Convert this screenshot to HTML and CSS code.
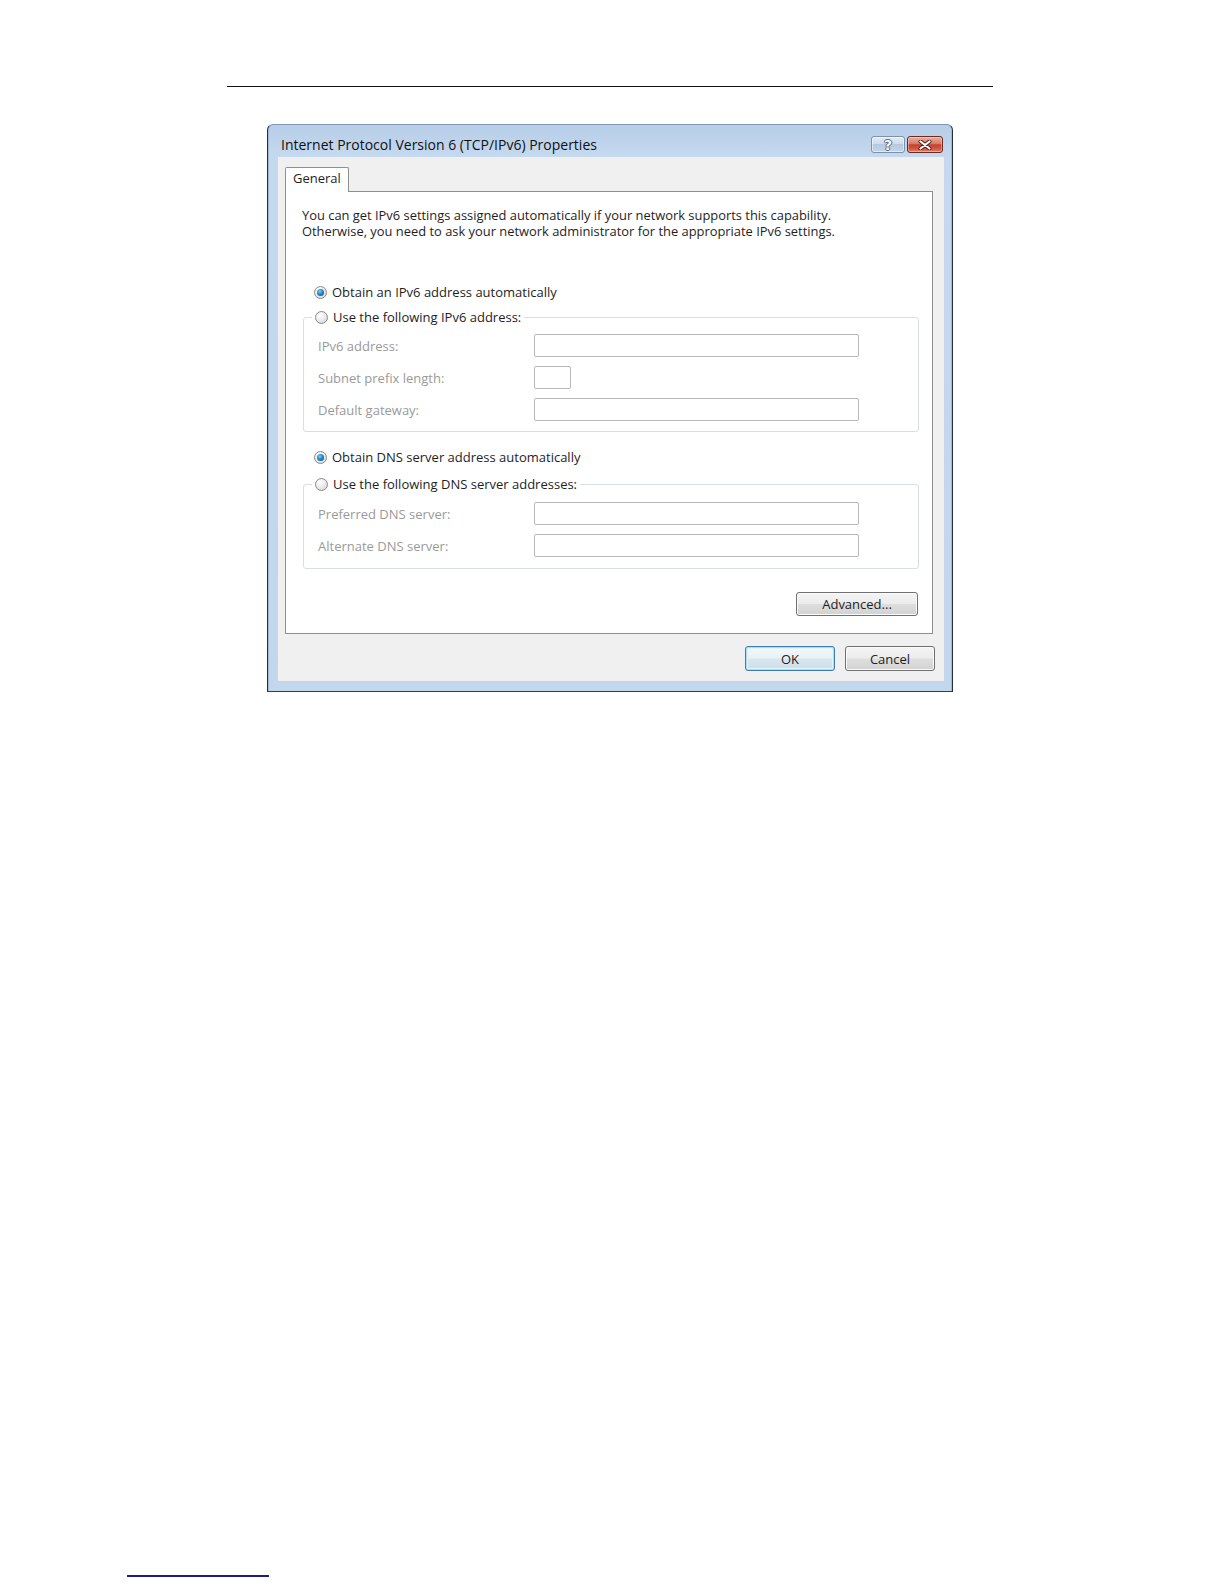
FILE: index.html
```html
<!DOCTYPE html>
<html lang="en">
<head>
<meta charset="utf-8">
<title>Internet Protocol Version 6 (TCP/IPv6) Properties</title>
<link rel="stylesheet" href="styles.css">
</head>
<body>
<div class="page">
  <div class="rule-top"></div>

  <div class="window">
    <div class="titlebar">
      <span class="title">Internet Protocol Version 6 (TCP/IPv6) Properties</span>
      <div class="caption-btns">
        <span class="cbtn help"><span class="qmark">?</span></span>
        <span class="cbtn close">
          <svg width="14" height="10" viewBox="0 0 14 10">
            <path d="M2.5 1.5 L11.5 8.5 M11.5 1.5 L2.5 8.5" stroke="#5a1a12" stroke-width="4" stroke-linecap="round"/>
            <path d="M2.5 1.5 L11.5 8.5 M11.5 1.5 L2.5 8.5" stroke="#ffffff" stroke-width="2.2" stroke-linecap="round"/>
          </svg>
        </span>
      </div>
    </div>

    <div class="client">
      <div class="tabs"><div class="tab">General</div></div>
      <div class="panel">
        <p class="desc">You can get IPv6 settings assigned automatically if your network supports this capability.<br>Otherwise, you need to ask your network administrator for the appropriate IPv6 settings.</p>

        <div class="radio-row first"><span class="radio checked"></span>Obtain an IPv6 address automatically</div>

        <fieldset class="group g1">
          <legend><span class="radio"></span>Use the following IPv6 address:</legend>
          <div class="fields">
            <span class="lbl">IPv6 address:</span><span class="input"></span>
            <span class="lbl">Subnet prefix length:</span><span class="input small"></span>
            <span class="lbl">Default gateway:</span><span class="input"></span>
          </div>
        </fieldset>

        <div class="radio-row second"><span class="radio checked"></span>Obtain DNS server address automatically</div>

        <fieldset class="group g2">
          <legend><span class="radio"></span>Use the following DNS server addresses:</legend>
          <div class="fields">
            <span class="lbl">Preferred DNS server:</span><span class="input"></span>
            <span class="lbl">Alternate DNS server:</span><span class="input"></span>
          </div>
        </fieldset>

        <div class="adv-row"><span class="btn adv">Advanced...</span></div>
      </div>
      <div class="btn-row">
        <span class="btn default">OK</span>
        <span class="btn">Cancel</span>
      </div>
    </div>
  </div>

  <div class="rule-bottom"></div>
</div>
</body>
</html>
```

FILE: styles.css
```css
* { box-sizing: border-box; }

body {
  margin: 0;
  background: #ffffff;
  font-family: "Open Sans", "Noto Sans", "DejaVu Sans", sans-serif;
  font-size: 13px;
  color: #1e1e1e;
}

.page {
  width: 1224px;
  height: 1584px;
  padding-top: 86px;
  overflow: hidden;
}

.rule-top {
  margin-left: 227px;
  width: 766px;
  height: 1px;
  background: #111111;
}

.rule-bottom {
  margin: 883px 0 0 127px;
  width: 142px;
  height: 2px;
  background: #1c1c8a;
}

/* ---------- window frame ---------- */
.window {
  margin: 37px 0 0 267px;
  width: 686px;
  height: 568px;
  border: 1px solid #22303f;
  border-top-color: #7f97b2;
  border-bottom-color: #1e4a3a;
  border-radius: 6px 6px 0 0;
  background: linear-gradient(to bottom, #b7cee8 0px, #c4d8ee 30px, #c3d7ec 100%);
  box-shadow: inset 1px 0 0 #9fb9d6, inset -1px 0 0 #9fb9d6;
  display: flex;
  flex-direction: column;
}

.titlebar {
  height: 32px;
  flex: none;
  display: flex;
  align-items: flex-start;
  justify-content: space-between;
  padding: 0 9px 0 13px;
}

.title {
  margin-top: 10px;
  font-size: 14px;
  line-height: 19px;
  color: #111111;
}

.caption-btns {
  display: flex;
  gap: 2px;
  margin-top: 11px;
}

.cbtn {
  height: 17px;
  border-radius: 3px;
  display: flex;
  align-items: center;
  justify-content: center;
}

.cbtn.help {
  width: 34px;
  border: 1px solid #7e91a8;
  background: linear-gradient(to bottom, #e3ecf6 0%, #ccdcee 45%, #b5c9e1 50%, #c3d5ea 100%);
  box-shadow: inset 0 0 0 1px rgba(255,255,255,0.5);
}

.qmark {
  font-family: "DejaVu Sans", sans-serif;
  font-weight: bold;
  font-size: 14px;
  line-height: 14px;
  color: #f4f7fb;
  text-shadow: 1px 0 0 #5c6b7e, -1px 0 0 #5c6b7e, 0 1px 0 #5c6b7e, 0 -1px 0 #5c6b7e;
}

.cbtn.close {
  width: 36px;
  border: 1px solid #6b2a22;
  background: linear-gradient(to bottom, #eab0a3 0%, #d77a68 45%, #c4412e 52%, #cf5a44 80%, #e08b70 100%);
  box-shadow: inset 0 0 0 1px rgba(255,220,210,0.45);
}

/* ---------- client area ---------- */
.client {
  flex: 1;
  margin: 0 8px 10px 10px;
  background: #f0f0f0;
  padding-top: 10px;
  display: flex;
  flex-direction: column;
}

.tabs {
  display: flex;
  margin-left: 7px;
  height: 24px;
}

.tab {
  width: 64px;
  height: 25px;
  background: #ffffff;
  border: 1px solid #8e8f8f;
  border-bottom: none;
  border-radius: 2px 2px 0 0;
  padding-left: 7px;
  line-height: 20px;
  position: relative;
  z-index: 1;
}

.panel {
  margin: 0 11px 0 7px;
  height: 443px;
  background: #ffffff;
  border: 1px solid #8e8f8f;
  padding: 15px 13px 0 17px;
  display: flex;
  flex-direction: column;
}

.desc {
  margin: 0 0 0 -1px;
  line-height: 16px;
  font-size: 12.9px;
}

.radio-row {
  display: flex;
  align-items: center;
  height: 16px;
  line-height: 16px;
  margin-left: 11px;
}

.radio-row.first { margin-top: 45px; }
.radio-row.second { margin-top: 17px; }

.radio {
  flex: none;
  display: inline-block;
  width: 13px;
  height: 13px;
  border-radius: 50%;
  border: 1px solid #8a8a8a;
  background: radial-gradient(circle at 35% 30%, #ffffff 0%, #ececec 45%, #cfcfcf 100%);
  margin-right: 5px;
  vertical-align: middle;
  position: relative;
}

.radio.checked::after {
  content: "";
  position: absolute;
  left: 2px;
  top: 2px;
  width: 7px;
  height: 7px;
  border-radius: 50%;
  background: radial-gradient(circle at 40% 35%, #7fd0f5 0%, #2b8fcf 40%, #135c8f 80%, #0e3f63 100%);
}

.group {
  margin: 9px 0 0 0;
  padding: 9px 0 10px 14px;
  border: 1px solid #d5dfe5;
  border-radius: 3px;
  min-width: 0;
}

.group.g2 {
  margin-top: 11px;
  padding-top: 10px;
  padding-bottom: 11px;
}

.group legend {
  margin-left: -6px;
  padding: 0 3px;
  display: flex;
  align-items: center;
  height: 16px;
  line-height: 16px;
}

.fields {
  display: grid;
  grid-template-columns: 216px 325px;
  grid-auto-rows: 23px;
  row-gap: 9px;
  align-items: center;
}

.lbl {
  color: #9a9a9a;
}

.input {
  display: block;
  height: 23px;
  background: #ffffff;
  border: 1px solid #b8b8b8;
  border-radius: 2px;
}

.input.small {
  width: 37px;
}

.adv-row {
  display: flex;
  justify-content: flex-end;
  margin-top: 23px;
  margin-right: 1px;
}

.btn {
  display: flex;
  align-items: center;
  justify-content: center;
  width: 90px;
  height: 25px;
  border: 1px solid #707070;
  border-radius: 3px;
  background: linear-gradient(to bottom, #f4f4f4 0%, #ececec 48%, #dedede 52%, #d2d2d2 100%);
  box-shadow: inset 0 0 0 1px #fbfbfb;
  color: #1e1e1e;
  line-height: 16px;
}

.btn.adv {
  width: 122px;
  height: 24px;
}

.btn.default {
  border-color: #3c7fb1;
  box-shadow: inset 0 0 0 1px #a8dcf7, inset 0 0 0 2px #e4f4fc;
  background: linear-gradient(to bottom, #f3f8fb 0%, #e9f1f6 48%, #d8e6ee 52%, #cfdee8 100%);
}

.btn-row {
  display: flex;
  justify-content: flex-end;
  gap: 10px;
  margin-top: 12px;
  padding-right: 9px;
}
```
